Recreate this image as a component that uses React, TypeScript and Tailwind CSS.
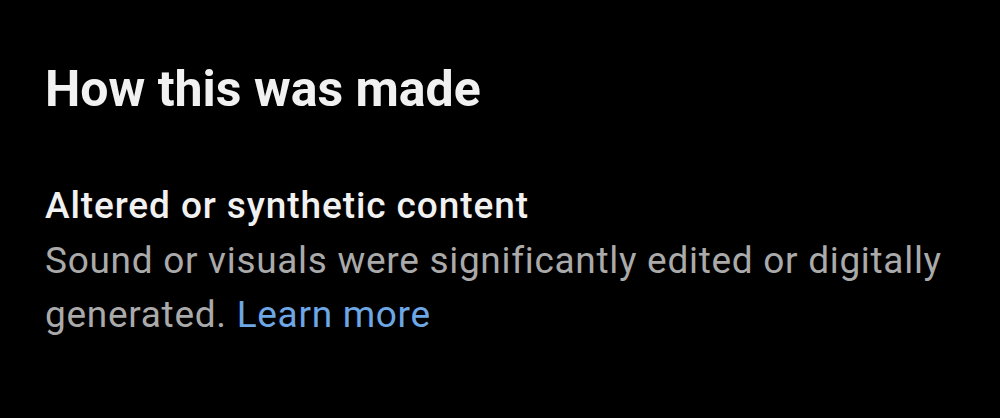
export default function App() {
  return (
    <div className="w-[1000px] h-[418px] bg-black overflow-hidden" style={{ fontFamily: "Roboto, 'Noto Sans', sans-serif" }}>
      <div className="pl-[45px] pt-[59px]">
        <h1 className="text-[50px] leading-[60px] font-bold text-[#f1f1f1]">How this was made</h1>
        <div className="mt-[61px]">
          <h2 className="text-[37px] leading-[52px] font-medium tracking-[0.9px] text-[#f1f1f1]">Altered or synthetic content</h2>
          <p className="mt-[2px] text-[37px] leading-[54px] tracking-[0.7px] text-[#aaaaaa] w-[940px]">
            Sound or visuals were significantly edited or digitally generated.{" "}
            <span className="text-[#6ea7e6]">Learn more</span>
          </p>
        </div>
      </div>
    </div>
  );
}
